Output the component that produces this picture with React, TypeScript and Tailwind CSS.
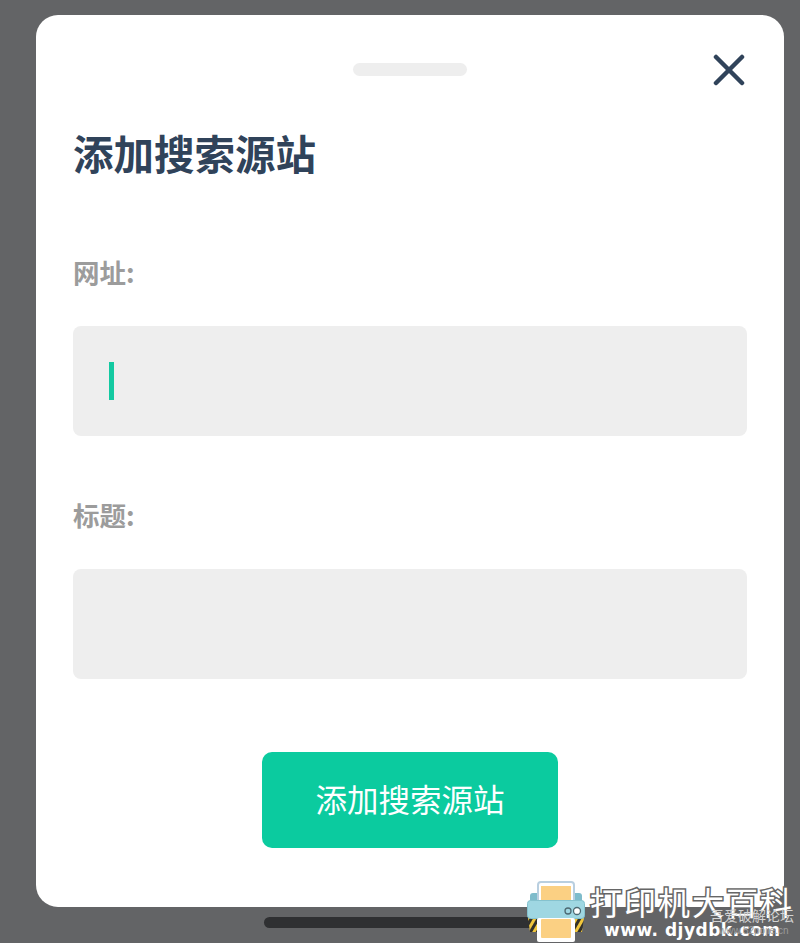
const cjk = { fontFamily: '"Noto Sans CJK SC", "Noto Sans", sans-serif' }

function PrinterLogo() {
  return (
    <svg width="58" height="62" viewBox="0 0 58 62" className="block shrink-0">
      <defs>
        <pattern id="hazard" width="6" height="6" patternUnits="userSpaceOnUse" patternTransform="rotate(30)">
          <rect width="6" height="6" fill="#33312a" />
          <rect width="3" height="6" fill="#f0c63c" />
        </pattern>
      </defs>
      <path d="M3 20 V15 Q3 12 6 12 H12 V20 Z" fill="#7fbccb" />
      <path d="M55 20 V15 Q55 12 52 12 H46 V20 Z" fill="#7fbccb" />
      <rect x="11" y="1" width="36" height="26" rx="3" fill="#fff" stroke="#b9cfe0" strokeWidth="2" />
      <rect x="14" y="5" width="30" height="15" fill="#fbd083" />
      <path d="M1 37 H10 V51 H3 Z" fill="url(#hazard)" />
      <path d="M57 37 H48 V51 H55 Z" fill="url(#hazard)" />
      <rect x="0.5" y="19.5" width="57" height="18" rx="3" fill="#9fd7e2" stroke="#85c2ce" strokeWidth="1" />
      <rect x="10" y="37" width="38" height="24" rx="2" fill="#fff" />
      <rect x="14" y="38" width="30" height="19" rx="1" fill="#fbd083" />
      <circle cx="41" cy="30" r="3" fill="none" stroke="#4d6a73" strokeWidth="1.3" />
      <circle cx="50" cy="30" r="3.5" fill="#fff" stroke="#4d6a73" strokeWidth="1.3" />
    </svg>
  )
}

function Watermark() {
  return (
    <div className="absolute left-[527px] top-[881px] flex w-[273px] items-start">
      <PrinterLogo />
      <div className="ml-[5px] flex flex-col pt-[2px] whitespace-nowrap">
        <div className="text-[32px] leading-[36px] tracking-[2px] text-white [-webkit-text-stroke:3px_#666] [paint-order:stroke_fill]" style={cjk}>
          打印机大百科
        </div>
        <div className="mt-[1px] pl-[14px] text-[17px] leading-[20px] font-bold tracking-[0.5px] text-white" style={{ fontFamily: '"DejaVu Sans", sans-serif' }}>
          www. djydbk.com
        </div>
      </div>
      <div className="absolute left-[183px] top-[26px] text-[14px] leading-[16px] whitespace-nowrap text-[#d4d4d4]" style={cjk}>
        吾爱破解论坛
      </div>
      <div className="absolute left-[192px] top-[44px] text-[10px] leading-[12px] whitespace-nowrap text-[#9a9a9a]" style={{ fontFamily: '"Liberation Sans", sans-serif' }}>
        www.52pojie.cn
      </div>
    </div>
  )
}

function Field({ label, focused, gap }: { label: string; focused?: boolean; gap: string }) {
  return (
    <div className={gap}>
      <div className="h-[36px] text-[26.5px] leading-[36px] font-bold text-[#9c9c9c]" style={cjk}>
        {label}
      </div>
      <div className="mt-[36px] flex h-[110px] items-center rounded-[8px] bg-[#eeeeee] pl-[36px]">
        {focused && <div className="h-[38px] w-[5px] bg-[#13c9a1]" />}
      </div>
    </div>
  )
}

export default function App() {
  return (
    <div className="relative h-[943px] w-[800px] overflow-hidden bg-[#636466]">
      <div className="pt-[15px] pl-[36px]">
        <div className="relative h-[892px] w-[748px] rounded-[22px] bg-white px-[37px]">
          <div className="mx-auto w-fit pt-[48px]">
            <div className="h-[13px] w-[114px] rounded-full bg-[#eeeeee]" />
          </div>
          <button className="absolute top-[39px] right-[39px] text-[#30435a]">
            <svg width="32" height="32" viewBox="0 0 32 32" fill="none" stroke="currentColor" strokeWidth="4.5" strokeLinecap="round" className="block">
              <path d="M3 3 L29 29" />
              <path d="M29 3 L3 29" />
            </svg>
          </button>
          <h1 className="mt-[49px] h-[56px] text-[40.5px] leading-[56px] font-bold text-[#30435a]" style={cjk}>
            添加搜索源站
          </h1>
          <Field label="网址:" focused gap="mt-[73px]" />
          <Field label="标题:" gap="mt-[61px]" />
          <div className="mt-[73px] flex justify-center">
            <button className="h-[96px] w-[296px] rounded-[10px] bg-[#0bcb9f] pb-[3px] text-[31.5px] font-normal text-white" style={cjk}>
              添加搜索源站
            </button>
          </div>
        </div>
      </div>
      <div className="mx-auto mt-[10px] h-[11px] w-[272px] rounded-full bg-[#2f3032]" />
      <Watermark />
    </div>
  )
}
